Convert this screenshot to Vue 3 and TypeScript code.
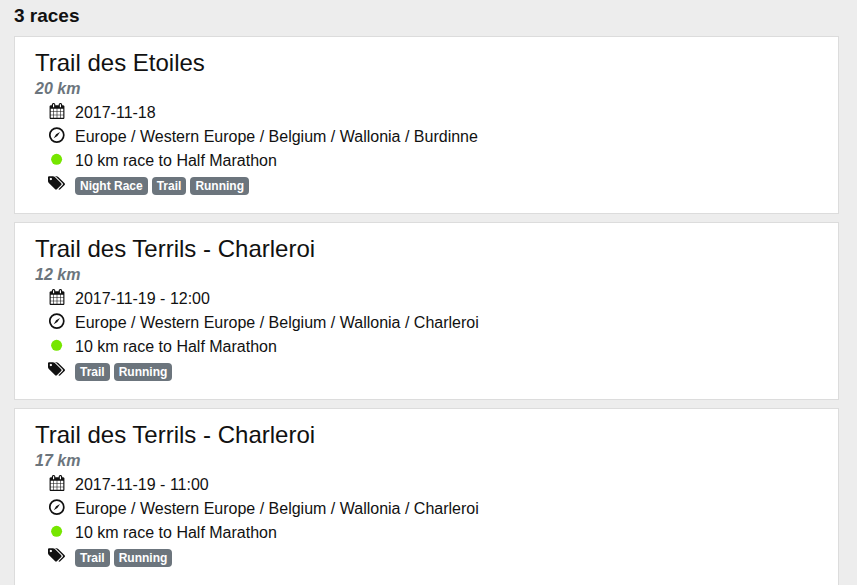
<script setup lang="ts">
interface Race {
  id: number
  name: string
  distance: string
  date: string
  place: string
  category: string
  tags: string[]
}

const races: Race[] = [
  {
    id: 1,
    name: 'Trail des Etoiles',
    distance: '20 km',
    date: '2017-11-18',
    place: 'Europe / Western Europe / Belgium / Wallonia / Burdinne',
    category: '10 km race to Half Marathon',
    tags: ['Night Race', 'Trail', 'Running'],
  },
  {
    id: 2,
    name: 'Trail des Terrils - Charleroi',
    distance: '12 km',
    date: '2017-11-19 - 12:00',
    place: 'Europe / Western Europe / Belgium / Wallonia / Charleroi',
    category: '10 km race to Half Marathon',
    tags: ['Trail', 'Running'],
  },
  {
    id: 3,
    name: 'Trail des Terrils - Charleroi',
    distance: '17 km',
    date: '2017-11-19 - 11:00',
    place: 'Europe / Western Europe / Belgium / Wallonia / Charleroi',
    category: '10 km race to Half Marathon',
    tags: ['Trail', 'Running'],
  },
]
</script>

<template>
  <main class="page">
    <h1 class="count">{{ races.length }} races</h1>
    <article v-for="race in races" :key="race.id" class="card">
      <h2 class="title">{{ race.name }}</h2>
      <p class="distance">{{ race.distance }}</p>
      <ul class="details">
        <li>
          <span class="icon">
            <svg width="16" height="16" viewBox="0 0 1792 1792" aria-hidden="true">
              <path d="M192 1664h288v-288h-288v288zm352 0h320v-288h-320v288zm-352-352h288v-320h-288v320zm352 0h320v-320h-320v320zm-352-384h288v-288h-288v288zm736 736h320v-288h-320v288zm-384-736h320v-288h-320v288zm768 736h288v-288h-288v288zm-384-352h320v-320h-320v320zm-352-864v-288q0-13-9.5-22.5t-22.5-9.5h-64q-13 0-22.5 9.5t-9.5 22.5v288q0 13 9.5 22.5t22.5 9.5h64q13 0 22.5-9.5t9.5-22.5zm736 864h288v-320h-288v320zm-384-384h320v-288h-320v288zm384 0h288v-288h-288v288zm32-480v-288q0-13-9.5-22.5t-22.5-9.5h-64q-13 0-22.5 9.5t-9.5 22.5v288q0 13 9.5 22.5t22.5 9.5h64q13 0 22.5-9.5t9.5-22.5zm384-64v1280q0 52-38 90t-90 38h-1408q-52 0-90-38t-38-90v-1280q0-52 38-90t90-38h128v-96q0-66 47-113t113-47h64q66 0 113 47t47 113v96h384v-96q0-66 47-113t113-47h64q66 0 113 47t47 113v96h128q52 0 90 38t38 90z" />
            </svg>
          </span>
          <span>{{ race.date }}</span>
        </li>
        <li>
          <span class="icon">
            <svg width="16" height="16" viewBox="0 0 16 16" aria-hidden="true">
              <circle cx="7.8" cy="8.1" r="7" fill="none" stroke="currentColor" stroke-width="1.7" />
              <path d="M11 4.9 8.4 8.9 4.7 11.3 7.1 7.3z" />
            </svg>
          </span>
          <span>{{ race.place }}</span>
        </li>
        <li>
          <span class="icon">
            <svg width="16" height="16" viewBox="0 0 16 16" aria-hidden="true">
              <circle class="dot" cx="7.6" cy="8.3" r="5.5" />
            </svg>
          </span>
          <span>{{ race.category }}</span>
        </li>
        <li>
          <span class="icon">
            <svg width="17" height="16" viewBox="0 0 1904 1792" aria-hidden="true">
              <path d="M448 448q0-53-37.5-90.5t-90.5-37.5-90.5 37.5-37.5 90.5 37.5 90.5 90.5 37.5 90.5-37.5 37.5-90.5zm1067 576q0 53-37 90l-491 492q-39 37-91 37-53 0-90-37l-715-716q-38-37-64.5-101t-26.5-117v-416q0-52 38-90t90-38h416q53 0 117 26.5t102 64.5l715 714q37 39 37 91zm384 0q0 53-37 90l-491 492q-39 37-91 37-36 0-59-14t-53-45l470-470q37-37 37-90 0-52-37-91l-715-714q-38-38-102-64.5t-117-26.5h224q53 0 117 26.5t102 64.5l715 714q37 39 37 91z" />
            </svg>
          </span>
          <span class="tags">
            <span v-for="tag in race.tags" :key="tag" class="tag">{{ tag }}</span>
          </span>
        </li>
      </ul>
    </article>
  </main>
</template>

<style>
body {
  margin: 0;
  background: #ededed;
}
</style>

<style scoped>
.page {
  display: flex;
  flex-direction: column;
  gap: 8px;
  padding: 4px 18px 8px 14px;
  color: #111;
  font-family: "Liberation Sans", Arial, sans-serif;
  font-size: 16px;
  line-height: 24px;
}

.count {
  margin: 0;
  font-size: 19px;
  font-weight: 700;
}

.card {
  padding: 12px 20px 16px;
  background: #fff;
  border: 1px solid #dcdcdc;
}

.title {
  margin: 0;
  font-size: 24px;
  font-weight: 400;
  line-height: 28px;
}

.distance {
  margin: 0;
  color: #6c757d;
  font-style: italic;
  font-weight: 700;
}

.details {
  margin: 0;
  padding: 0 0 0 12px;
  list-style: none;
}

.details li {
  display: flex;
  gap: 10px;
}

.icon {
  display: flex;
  flex: none;
  justify-content: flex-end;
  width: 18px;
  padding-top: 2px;
}

.icon svg {
  fill: currentColor;
}

.icon .dot {
  fill: #76e600;
}

.tags {
  display: flex;
  flex-wrap: wrap;
  gap: 4px;
  padding: 4px 0 2px;
}

.tag {
  padding: 0 5px;
  border-radius: 4px;
  background: #6c757d;
  color: #fff;
  font-size: 12px;
  font-weight: 700;
  line-height: 18px;
}
</style>
